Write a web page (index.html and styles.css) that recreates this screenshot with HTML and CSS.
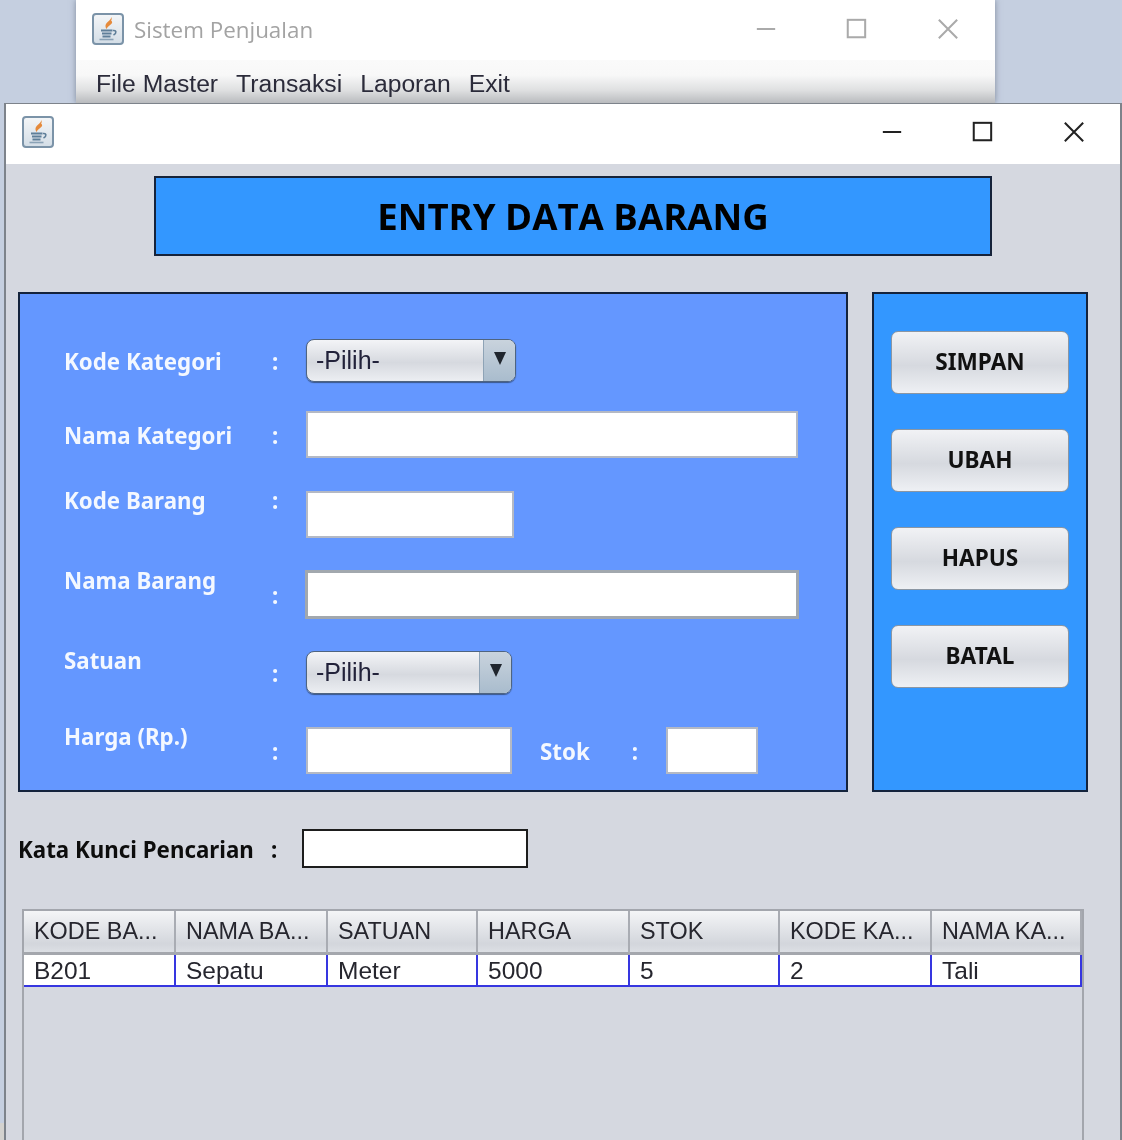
FILE: index.html
```html
<!DOCTYPE html>
<html lang="en">
<head>
    <meta charset="UTF-8">
    <meta name="viewport" content="width=device-width, initial-scale=1.0">
    <title>Sistem Penjualan</title>
    <link rel="stylesheet" href="styles.css">
</head>
<body>
    <svg class="defs" width="0" height="0">
        <defs>
            <linearGradient id="iconBg" x1="0" y1="0" x2="0" y2="1">
                <stop offset="0" stop-color="#f4f6f8"/>
                <stop offset="1" stop-color="#d3dde6"/>
            </linearGradient>
            <symbol id="javaIcon" viewBox="0 0 32 32">
                <rect x="1" y="1" width="30" height="30" rx="3" fill="url(#iconBg)" stroke="#7b93a8" stroke-width="2"/>
                <path d="M19 4c1 3-5 5-5.500 8.500-.2 1.500.5 3 1.500 3.500-.5-2 4-4 5-6 .6-1.200-.5-2.200-1-2.500 1-1 .8-2.500 0-3.500z" fill="#e58a3c"/>
                <path d="M9 17.500h11.500M10 20.500h9.500M10.500 23.500h8" stroke="#5f7f99" stroke-width="1.800" fill="none"/>
                <path d="M21 17.500c3.500-.5 4 2.500.5 4.500" stroke="#5f7f99" stroke-width="1.600" fill="none"/>
                <path d="M7.500 26.500h14" stroke="#8aa2b6" stroke-width="1.600" fill="none"/>
            </symbol>
        </defs>
    </svg>

    <div class="desktop">
        <div class="back-window">
            <div class="titlebar back-titlebar">
                <svg class="java-icon"><use href="#javaIcon"/></svg>
                <span class="title-text">Sistem Penjualan</span>
                <div class="win-controls">
                    <svg class="win-btn" viewBox="0 0 24 24"><path d="M2 12h20"/></svg>
                    <svg class="win-btn" viewBox="0 0 24 24"><rect x="3" y="2" width="19" height="19"/></svg>
                    <svg class="win-btn" viewBox="0 0 24 24"><path d="M2 2l20 20M22 2L2 22"/></svg>
                </div>
            </div>
            <div class="menubar">
                <span>File Master</span>
                <span>Transaksi</span>
                <span>Laporan</span>
                <span>Exit</span>
            </div>
        </div>

        <div class="front-window">
            <div class="titlebar front-titlebar">
                <svg class="java-icon"><use href="#javaIcon"/></svg>
                <div class="win-controls">
                    <svg class="win-btn" viewBox="0 0 24 24"><path d="M2 12h20"/></svg>
                    <svg class="win-btn" viewBox="0 0 24 24"><rect x="3" y="2" width="19" height="19"/></svg>
                    <svg class="win-btn" viewBox="0 0 24 24"><path d="M2 2l20 20M22 2L2 22"/></svg>
                </div>
            </div>

            <div class="content">
                <h1 class="banner">ENTRY DATA BARANG</h1>

                <div class="panels">
                    <div class="form-panel">
                        <div class="row">
                            <label class="lbl">Kode Kategori</label>
                            <span class="colon">:</span>
                            <div class="combo combo-a"><span>-Pilih-</span><i class="arrow"></i></div>
                        </div>
                        <div class="row">
                            <label class="lbl">Nama Kategori</label>
                            <span class="colon">:</span>
                            <input class="field field-long" type="text">
                        </div>
                        <div class="row">
                            <label class="lbl lbl-top">Kode Barang</label>
                            <span class="colon lbl-top">:</span>
                            <input class="field field-mid" type="text">
                        </div>
                        <div class="row">
                            <label class="lbl lbl-top">Nama Barang</label>
                            <span class="colon colon-low">:</span>
                            <input class="field field-long field-focus" type="text">
                        </div>
                        <div class="row">
                            <label class="lbl lbl-top">Satuan</label>
                            <span class="colon colon-mid">:</span>
                            <div class="combo combo-b"><span>-Pilih-</span><i class="arrow"></i></div>
                        </div>
                        <div class="row">
                            <label class="lbl lbl-top">Harga (Rp.)</label>
                            <span class="colon colon-low">:</span>
                            <input class="field field-harga" type="text">
                            <label class="lbl lbl-stok">Stok</label>
                            <span class="colon colon-stok">:</span>
                            <input class="field field-stok" type="text">
                        </div>
                    </div>

                    <div class="side-panel">
                        <button class="btn">SIMPAN</button>
                        <button class="btn">UBAH</button>
                        <button class="btn">HAPUS</button>
                        <button class="btn">BATAL</button>
                    </div>
                </div>

                <div class="search">
                    <label class="search-label">Kata Kunci Pencarian</label>
                    <span class="search-colon">:</span>
                    <input class="search-input" type="text">
                </div>

                <div class="table-wrap">
                    <table class="grid">
                        <thead>
                            <tr>
                                <th>KODE BA...</th>
                                <th>NAMA BA...</th>
                                <th>SATUAN</th>
                                <th>HARGA</th>
                                <th>STOK</th>
                                <th>KODE KA...</th>
                                <th>NAMA KA...</th>
                            </tr>
                        </thead>
                        <tbody>
                            <tr>
                                <td>B201</td>
                                <td>Sepatu</td>
                                <td>Meter</td>
                                <td>5000</td>
                                <td>5</td>
                                <td>2</td>
                                <td>Tali</td>
                            </tr>
                        </tbody>
                    </table>
                </div>
            </div>
        </div>
    </div>
</body>
</html>
```

FILE: styles.css
```css
* {
    box-sizing: border-box;
}
html, body {
    margin: 0;
    height: 100%;
    overflow: hidden;
}
.defs {
    position: absolute;
}
.desktop {
    height: 1140px;
    display: flex;
    flex-direction: column;
    background: linear-gradient(#c5cfe0 98.5%, #d3d2cf 98.5%);
    font-family: "Liberation Sans", Arial, sans-serif;
    filter: blur(.45px);
}

/* windows */
.back-window {
    margin-left: 76px;
    width: 919px;
    height: 103px;
    flex: none;
    background: #fff;
    box-shadow: 0 0 6px rgba(70, 80, 100, .55);
}
.titlebar {
    display: flex;
    align-items: center;
    height: 60px;
    background: #fff;
}
.back-titlebar {
    padding-left: 16px;
    padding-bottom: 2px;
}
.front-titlebar {
    padding-left: 16px;
    padding-bottom: 4px;
}
.java-icon {
    width: 32px;
    height: 32px;
    flex: none;
}
.title-text {
    margin-left: 10px;
    font-family: "Open Sans", sans-serif;
    font-size: 22.4px;
    color: #a3a3a3;
}
.win-controls {
    margin-left: auto;
    display: flex;
    gap: 70px;
    padding-right: 35px;
}
.win-btn {
    width: 22px;
    height: 22px;
    fill: none;
    stroke: #222;
    stroke-width: 2.2;
}
.win-btn:first-child {
    margin-right: -2px;
}
.back-titlebar .win-btn {
    stroke: #aaa;
}
.back-titlebar .win-controls {
    padding-right: 36px;
}
.menubar {
    height: 43px;
    display: flex;
    gap: 18px;
    align-items: center;
    padding: 5px 0 0 20px;
    background: linear-gradient(#fafafa 0, #f8f8f8 35%, #dfe0e1 70%, #b9bbbe 100%);
    font-size: 24.7px;
    color: #2b2b3a;
}
.front-window {
    margin-left: 4px;
    width: 1118px;
    flex: 1;
    min-height: 0;
    display: flex;
    flex-direction: column;
    border: 2px solid #7d838b;
    border-width: 1px 2px 0 2px;
    background: #d5d8e0;
}
.content {
    flex: 1;
    min-height: 0;
    display: flex;
    flex-direction: column;
    padding-top: 12px;
}

/* banner */
.banner {
    margin: 0 0 0 148px;
    width: 838px;
    height: 80px;
    flex: none;
    display: flex;
    align-items: center;
    justify-content: center;
    background: #3397ff;
    border: 2px solid #16233a;
    font-family: "Open Sans", sans-serif;
    font-size: 36.6px;
    font-weight: 700;
    color: #000;
}

/* form + buttons */
.panels {
    margin: 36px 0 0 12px;
    height: 500px;
    flex: none;
    display: flex;
    gap: 24px;
}
.form-panel {
    width: 830px;
    background: #6497ff;
    border: 2px solid #14233c;
    padding: 45px 0 0 44px;
    display: grid;
    grid-template-rows: 72px 80px 80px 80px 76px 47px;
}
.row {
    display: flex;
    align-items: center;
    align-self: start;
}
.lbl, .colon, .search-label, .search-colon {
    font-family: "Noto Sans", sans-serif;
    font-size: 22.3px;
    font-weight: 700;
    line-height: 22px;
    padding-top: 2px;
}
.lbl {
    width: 208px;
    color: #f4f8ff;
}
.lbl-top {
    align-self: flex-start;
    margin-top: -3px;
}
.colon {
    width: 34px;
    color: #f4f8ff;
}
.colon-low {
    align-self: flex-end;
    margin-bottom: 11px;
}
.colon-mid {
    align-self: flex-end;
    margin-bottom: 9px;
}
.lbl-stok {
    width: auto;
    margin-left: 28px;
}
.colon-stok {
    width: auto;
    margin-left: 42px;
    margin-right: 28px;
}
.field {
    height: 47px;
    border: 2px solid #b4b9c4;
    background: #fff;
    padding: 0;
}
.field-long {
    width: 492px;
}
.field-mid {
    width: 208px;
}
.field-harga {
    width: 206px;
}
.field-stok {
    width: 92px;
}
.field-focus {
    border-color: #a2a8ae;
    box-shadow: 0 0 0 1px #a2a8ae;
}
.combo {
    height: 43px;
    display: flex;
    align-items: center;
    justify-content: space-between;
    padding-left: 9px;
    border: 1px solid #4f6480;
    border-radius: 8px;
    box-shadow: 0 1px 1px rgba(40, 60, 90, .7);
    background: linear-gradient(#f3f4f7, #d6d9df 55%, #eceef2);
    font-size: 25px;
    color: #22223a;
    overflow: hidden;
}
.combo-a {
    width: 210px;
}
.combo-b {
    width: 206px;
}
.arrow {
    width: 32px;
    align-self: stretch;
    display: flex;
    align-items: center;
    justify-content: center;
    padding-bottom: 4px;
    border-left: 1px solid #8ea3b6;
    background: linear-gradient(#c9d3dd, #a9bccd);
}
.arrow::before {
    content: "";
    border-left: 6px solid transparent;
    border-right: 6px solid transparent;
    border-top: 13px solid #20262e;
}
.side-panel {
    width: 216px;
    background: #3397ff;
    border: 2px solid #14233c;
    padding: 37px 0 0 17px;
    display: flex;
    flex-direction: column;
    gap: 35px;
}
.btn {
    width: 178px;
    height: 63px;
    padding: 0 0 3px;
    border: 1px solid #8b96a3;
    border-radius: 7px;
    background: linear-gradient(#f1f2f5, #d6d9df 55%, #eef0f4);
    font-family: "Noto Sans", sans-serif;
    font-size: 22.6px;
    font-weight: 700;
    color: #111;
}

/* search */
.search {
    margin: 37px 0 0 12px;
    height: 39px;
    flex: none;
    display: flex;
    align-items: center;
}
.search-label {
    width: 253px;
    color: #0d0d0d;
}
.search-colon {
    width: 31px;
    color: #0d0d0d;
}
.search-input {
    width: 226px;
    height: 39px;
    border: 2px solid #1d1d1d;
    background: #fff;
    padding: 0;
}

/* table */
.table-wrap {
    margin: 41px 0 0 16px;
    width: 1062px;
    flex: 1;
    min-height: 0;
    border: 2px solid #a3a6ad;
    border-bottom: 0;
}
.grid {
    width: 1058px;
    table-layout: fixed;
    border-collapse: separate;
    border-spacing: 0;
    color: #26262e;
}
.grid th {
    width: 152px;
    height: 44px;
    padding: 0 0 0 10px;
    text-align: left;
    font-size: 23.4px;
    font-weight: 400;
    white-space: nowrap;
    overflow: hidden;
    background: linear-gradient(#f4f5f7, #d3d6dc 80%, #dcdfe4);
    border-right: 2px solid #a9acb3;
    border-bottom: 3px solid #a4a7ad;
}
.grid th:nth-child(3), .grid th:nth-child(5), .grid th:nth-child(7) {
    width: 150px;
}
.grid td {
    height: 32px;
    padding: 1px 0 0 10px;
    font-size: 24.5px;
    background: #fff;
    border-right: 2px solid #3636e0;
    border-bottom: 2px solid #3636e0;
    white-space: nowrap;
}
```
